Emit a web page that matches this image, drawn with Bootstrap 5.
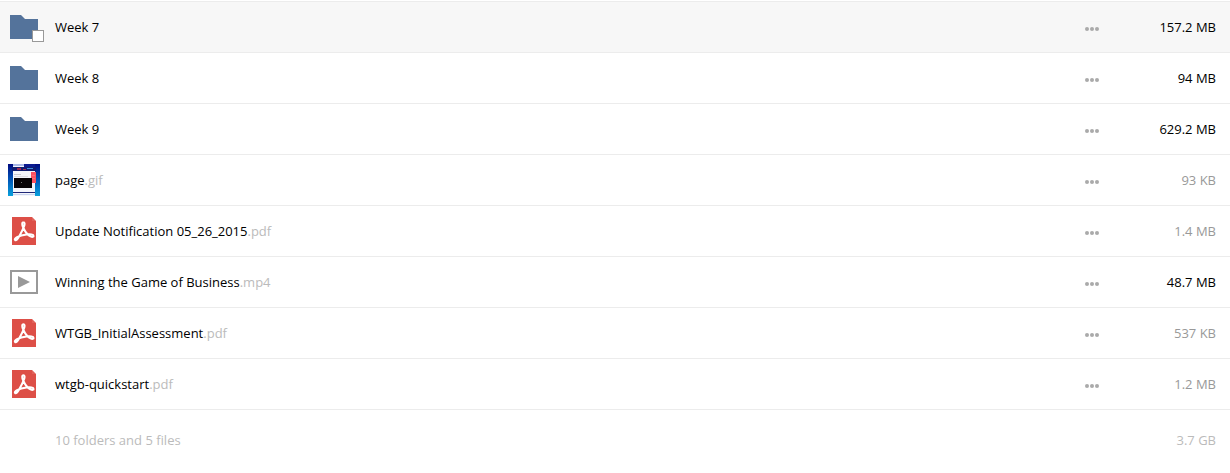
<!DOCTYPE html>
<html lang="en">
<head>
<meta charset="utf-8">
<meta name="viewport" content="width=device-width, initial-scale=1">
<title>Files</title>
<link href="https://cdn.jsdelivr.net/npm/bootstrap@5.3.0/dist/css/bootstrap.min.css" rel="stylesheet">
<style>
body { font: 13px/20px "Open Sans", "Noto Sans", sans-serif; color: #000; background: #fff; }
.file-list { padding-top: 1px; }
.file-table { border-collapse: separate; border-spacing: 0; table-layout: fixed; border-top: 1px solid #ececec; }
.file-table td { height: 51px; padding: 0; vertical-align: middle; }
.file-table tbody td { border-bottom: 1px solid #ececec; }
.file-table tfoot td { height: 60px; color: #bbb; }
.file-table .is-hovered td { background: #f7f7f7; }
.col-icon { width: 55px; }
.col-menu { width: 62px; }
.col-size { width: 86px; }
.thumb { width: 32px; height: 32px; margin-left: 8px; }
.thumb svg { width: 32px; height: 32px; display: block; }
.pick { appearance: none; position: absolute; right: -4px; bottom: 1px; width: 12px; height: 12px; margin: 0; background: #fff; border: 1px solid #999; }
.file-link { color: #000; text-decoration: none; }
.ext { color: #bbb; }
.dots { line-height: 0; padding: 4px 0 0; margin-left: 3px; border: 0; background: none; }
.dots svg { width: 14px; height: 4px; }
.file-table .file-size { text-align: right; padding-right: 14px; }
.dim { color: #999; }
</style>
</head>
<body>
<svg class="d-none" aria-hidden="true">
  <symbol id="folder" viewBox="0 0 32 32"><path fill="#54739b" d="M2 4h11l4 4h13v20H2z"/></symbol>
  <symbol id="pdf" viewBox="0 0 32 32">
    <path fill="#dd4f47" d="M4 2h20l4 4v24H4z"/><path fill="#e98a84" d="M24 2l4 4h-4z" opacity=".3"/>
    <path fill="none" stroke="#fff" stroke-width="2" stroke-linecap="round" stroke-linejoin="round" d="M15.500 7.200c-1.800 0-1.500 2.700-.3 5.300 1.400 3.300 3.800 7.200 7.300 8.900 1.800.8 3.200.6 3.100-.5-.1-1.500-3.200-1.900-7.100-1.400-3.500.4-7 1.400-9.500 2.700-2 1-2.600 2.200-1.900 2.900 1 .8 2.600-1 4.300-4 2-3.500 4-8 4.900-10.500.6-1.900.3-3.400-.8-3.400z"/>
  </symbol>
  <symbol id="video" viewBox="0 0 32 32"><path fill="#fff" stroke="#999" stroke-width="2" d="M3 5h26v22H3z"/><path fill="#999" d="M10 10l12 6-12 6z"/></symbol>
  <symbol id="more" viewBox="0 0 14 4"><g fill="#aaa"><circle cx="2" cy="2" r="2"/><circle cx="7" cy="2" r="2"/><circle cx="12" cy="2" r="2"/></g></symbol>
</svg>
<main class="file-list">
<table class="file-table w-100 mb-0">
  <colgroup><col class="col-icon"><col><col class="col-menu"><col class="col-size"></colgroup>
  <tbody>
    <tr class="is-hovered">
      <td><div class="thumb position-relative"><svg><use href="#folder"/></svg><input class="pick" type="checkbox" aria-label="Select Week 7"></div></td>
      <td><a class="file-link" href="#">Week 7</a></td>
      <td><button class="dots" type="button" aria-label="More actions"><svg><use href="#more"/></svg></button></td>
      <td class="file-size">157.2 MB</td>
    </tr>
    <tr>
      <td><div class="thumb"><svg><use href="#folder"/></svg></div></td>
      <td><a class="file-link" href="#">Week 8</a></td>
      <td><button class="dots" type="button" aria-label="More actions"><svg><use href="#more"/></svg></button></td>
      <td class="file-size">94 MB</td>
    </tr>
    <tr>
      <td><div class="thumb"><svg><use href="#folder"/></svg></div></td>
      <td><a class="file-link" href="#">Week 9</a></td>
      <td><button class="dots" type="button" aria-label="More actions"><svg><use href="#more"/></svg></button></td>
      <td class="file-size">629.2 MB</td>
    </tr>
    <tr>
      <td><div class="thumb"><svg viewBox="0 0 32 32">
        <defs><linearGradient id="sky" x2="0" y2="1"><stop offset="0" stop-color="#000a80"/><stop offset=".45" stop-color="#0050b4"/><stop offset="1" stop-color="#08a0dc"/></linearGradient></defs>
        <path fill="url(#sky)" d="M0 0h32v32H0z"/>
        <path fill="#f4f5fb" d="M5 2h22v30H5z"/>
        <path fill="#a9b8e8" d="M5 0h11v2H5z"/><path fill="#0a1a90" d="M16 0h11v3H16z"/>
        <path fill="#101c70" d="M4 3h24v4H4z"/><path fill="#a02850" d="M9 4h4v2H9zM15 5h3v1h-3z"/><path fill="#3f8de0" d="M19 4h6v1h-6z"/>
        <path fill="#c8c8d0" d="M6 10h7v1H6z"/><path fill="#dedee4" d="M6 12h14v1H6z"/>
        <path fill="#fa5262" d="M23 8h5v11h-5z"/><path fill="#fc6c78" d="M24 11h3v1h-3zM24 14h3v1h-3z"/>
        <path fill="#080408" d="M6 14h18v10H6z"/><path fill="#777" d="M13 18h1v1h-1z"/>
        <path fill="#202878" d="M5 28h22v1H5z"/><path fill="#c9d4ee" d="M5 30h22v1H5z"/>
      </svg></div></td>
      <td><a class="file-link" href="#">page<span class="ext">.gif</span></a></td>
      <td><button class="dots" type="button" aria-label="More actions"><svg><use href="#more"/></svg></button></td>
      <td class="file-size dim">93 KB</td>
    </tr>
    <tr>
      <td><div class="thumb"><svg><use href="#pdf"/></svg></div></td>
      <td><a class="file-link" href="#">Update Notification 05_26_2015<span class="ext">.pdf</span></a></td>
      <td><button class="dots" type="button" aria-label="More actions"><svg><use href="#more"/></svg></button></td>
      <td class="file-size dim">1.4 MB</td>
    </tr>
    <tr>
      <td><div class="thumb"><svg><use href="#video"/></svg></div></td>
      <td><a class="file-link" href="#">Winning the Game of Business<span class="ext">.mp4</span></a></td>
      <td><button class="dots" type="button" aria-label="More actions"><svg><use href="#more"/></svg></button></td>
      <td class="file-size">48.7 MB</td>
    </tr>
    <tr>
      <td><div class="thumb"><svg><use href="#pdf"/></svg></div></td>
      <td><a class="file-link" href="#">WTGB_InitialAssessment<span class="ext">.pdf</span></a></td>
      <td><button class="dots" type="button" aria-label="More actions"><svg><use href="#more"/></svg></button></td>
      <td class="file-size dim">537 KB</td>
    </tr>
    <tr>
      <td><div class="thumb"><svg><use href="#pdf"/></svg></div></td>
      <td><a class="file-link" href="#">wtgb-quickstart<span class="ext">.pdf</span></a></td>
      <td><button class="dots" type="button" aria-label="More actions"><svg><use href="#more"/></svg></button></td>
      <td class="file-size dim">1.2 MB</td>
    </tr>
  </tbody>
  <tfoot>
    <tr><td></td><td>10 folders and 5 files</td><td></td><td class="file-size">3.7 GB</td></tr>
  </tfoot>
</table>
</main>
</body>
</html>
